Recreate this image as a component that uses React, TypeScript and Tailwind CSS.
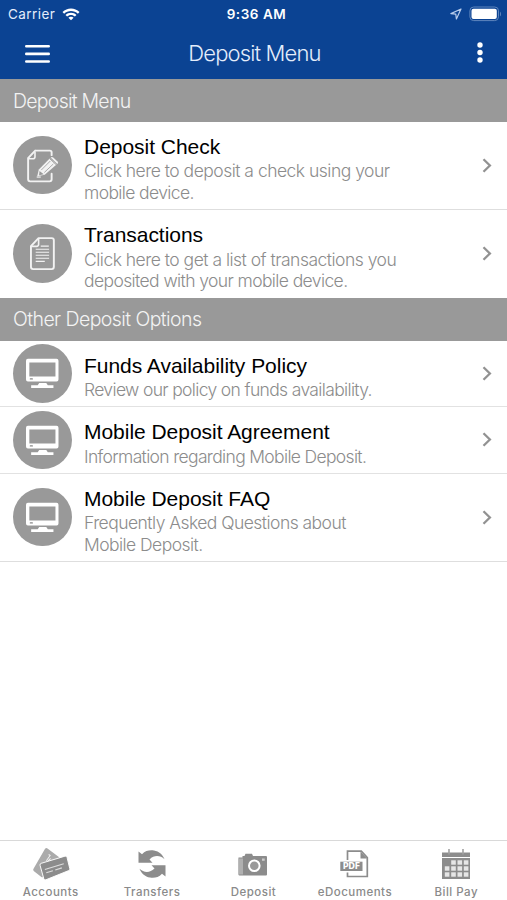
import type { ReactNode } from 'react';

type IconProps = { className?: string };

function WifiIcon() {
  return (
    <svg viewBox="0 0 18 13" className="ml-[7px] h-[13px] w-[18px]" fill="white">
      <path d="M9 0.5c3.200 0 6.200 1.200 8.500 3.500L15.900 5.700C14 3.900 11.600 2.900 9 2.900S4 3.900 2.100 5.700L0.500 4C2.800 1.700 5.800 0.500 9 0.500z" />
      <path d="M9 4.700c2.100 0 4 0.800 5.500 2.200L12.900 8.500C11.800 7.500 10.500 6.900 9 6.900S6.200 7.500 5.100 8.500L3.500 6.900C5 5.500 6.900 4.700 9 4.700z" />
      <path d="M9 8.700c1 0 1.900 0.400 2.600 1L9 12.300 6.400 9.700c0.700-0.600 1.600-1 2.600-1z" />
    </svg>
  );
}

function BatteryIcon() {
  return (
    <svg viewBox="0 0 33 16" className="ml-[7px] h-4 w-[33px]" fill="none">
      <rect x="0.900" y="1" width="28.600" height="13.600" rx="3.800" stroke="#5f86bd" strokeWidth="1" />
      <rect x="2.500" y="2.700" width="25.300" height="10.200" rx="2" fill="white" />
      <path d="M31 5.700c1.300 0.600 1.300 4 0 4.600z" fill="#5f86bd" />
    </svg>
  );
}

function StatusBar() {
  return (
    <div className="grid h-[27px] grid-cols-3 items-center text-white">
      <div className="flex items-center pl-[8px] pt-px font-['Inter'] text-[13.5px] tracking-[0.42px] text-[#e4edfb]">
        Carrier
        <WifiIcon />
      </div>
      <div className="pl-[6px] pt-px text-center font-['Inter'] text-[13.5px] font-semibold tracking-[0.55px]">9:36 AM</div>
      <div className="flex items-center justify-end pr-[5px]">
        <svg viewBox="0 0 12 12" className="h-3 w-3" fill="none" stroke="#b9cdec" strokeWidth="1.200" strokeLinejoin="round">
          <path d="M11 1 0.900 5.600 5.800 6.200 6.400 11z" />
        </svg>
        <BatteryIcon />
      </div>
    </div>
  );
}

function NavBar() {
  return (
    <div className="flex h-[52px] items-center justify-between pl-[25px] pr-[24px]">
      <svg viewBox="0 0 25 20" className="mt-px h-5 w-[25px]" stroke="white" strokeWidth="2.600" strokeLinecap="round">
        <path d="M1.300 2.200h22.400M1.300 9.900h22.400M1.300 17.500h22.400" />
      </svg>
      <h1 className="mr-[18px] pt-px font-['Inter'] text-[22px] font-light tracking-[-0.85px] text-[#e4edfb]">Deposit Menu</h1>
      <svg viewBox="0 0 6 22" className="h-[22px] w-[6px]" fill="white">
        <circle cx="3" cy="3" r="2.700" />
        <circle cx="3" cy="10.500" r="2.700" />
        <circle cx="3" cy="18" r="2.700" />
      </svg>
    </div>
  );
}

function EditIcon() {
  return (
    <svg viewBox="0 0 58 58" className="size-full" fill="none" stroke="#f2f2f2" strokeWidth="1.900">
      <path d="M22 14.500h14.500q1.800 0 1.800 1.800v2.700M38.300 37.500v5.500q0 2-2 2H17q-2 0-2-2V22l7-7.500" strokeLinecap="round" />
      <path d="M15.500 22.500h4.300q2 0 2-2v-5" strokeWidth="1.600" />
      <path d="M24 40l1.600-6.800 11-11.200 6.600 6.200-11.700 10.200z" fill="#f2f2f2" stroke="none" />
      <path d="M37.400 21.200q1.300-1 2.500 0l4.300 4q1.100 1.200 0 2.300l-0.300 0.200-6.600-6.300z" fill="#f2f2f2" stroke="none" />
      <path d="M28 33.800l9-9M31 36.200l9-8.500M36.200 22.400l6.800 6.300" stroke="#999" strokeWidth="0.800" />
      <path d="M26.300 34.600l4.200 3.200-4.600 1.100z" fill="#999" stroke="none" />
      <path d="M23.500 40.700h4" strokeWidth="1.200" />
    </svg>
  );
}

function DocumentIcon() {
  return (
    <svg viewBox="0 0 58 58" className="size-full" fill="none" stroke="#f2f2f2" strokeWidth="1.900">
      <path d="M25.300 14h13q2.200 0 2.200 2.200v26.300q0 2.200-2.200 2.200H20q-2.200 0-2.200-2.200V22z" strokeLinejoin="round" />
      <path d="M18.200 22.200h5.200q2 0 2-2v-5.500" strokeWidth="1.600" />
      <path d="M27.500 22h8M22.500 25h13.300M22.500 28h13.300M22.500 31h13.300M22.500 34h13.300M22.500 37h9" strokeWidth="1.150" />
    </svg>
  );
}

function MonitorIcon() {
  return (
    <svg viewBox="0 0 58 58" className="size-full">
      <path
        d="M14.800 14.600h28.400q1.900 0 1.900 1.900v18.800q0 1.900-1.900 1.900H14.800q-1.900 0-1.900-1.900V16.500q0-1.900 1.900-1.900zM16.200 18.400v13.700h25.900V18.400z"
        fill="white"
        fillRule="evenodd"
      />
      <path d="M26 38.600h7l1.500 2.300h5.600v2.600H18v-2.600h6.500z" fill="white" />
      <rect x="16.600" y="34" width="3.200" height="1.200" rx="0.600" fill="#888" />
    </svg>
  );
}

function ChevronIcon() {
  return (
    <svg viewBox="0 0 10 15" className="h-[15px] w-[10px] shrink-0" fill="none" stroke="#929292" strokeWidth="2.300">
      <path d="M1.500 1.200 7.900 7.500 1.500 13.800" />
    </svg>
  );
}

function SectionHeader({ className, children }: { className: string; children: ReactNode }) {
  return (
    <div className={`flex items-center bg-[#999] pl-[13px] pt-[2px] font-['Inter'] text-[19.500px] font-light text-[#f3f3f3] ${className}`}>
      {children}
    </div>
  );
}

type MenuItem = {
  title: string;
  lines: { text: string; className: string }[];
  icon: ReactNode;
  className: string;
};

function MenuRow({ item }: { item: MenuItem }) {
  return (
    <div className={`flex items-center pl-[13px] pr-[15px] ${item.className}`}>
      <div className="size-[58.500px] shrink-0 rounded-full bg-[#999]">{item.icon}</div>
      <div className="ml-[12.500px] flex-1 whitespace-nowrap pt-[8px]">
        <div className="mb-[2.500px] font-['Liberation_Sans'] text-[21px] leading-[23px] tracking-[-0.03px] text-black">
          {item.title}
        </div>
        {item.lines.map((line) => (
          <div
            key={line.text}
            className={`font-['Inter'] text-[17.500px] font-light leading-[21.500px] text-[#8c8c8c] ${line.className}`}
          >
            {line.text}
          </div>
        ))}
      </div>
      <ChevronIcon />
    </div>
  );
}

const depositItems: MenuItem[] = [
  {
    title: 'Deposit Check',
    lines: [
      { text: 'Click here to deposit a check using your', className: 'tracking-[-0.51px]' },
      { text: 'mobile device.', className: 'tracking-[-0.62px]' },
    ],
    icon: <EditIcon />,
    className: 'h-[88px] border-b border-[#dedede]',
  },
  {
    title: 'Transactions',
    lines: [
      { text: 'Click here to get a list of transactions you', className: 'tracking-[-0.51px]' },
      { text: 'deposited with your mobile device.', className: 'tracking-[-0.6px]' },
    ],
    icon: <DocumentIcon />,
    className: 'h-[88px]',
  },
];

const otherItems: MenuItem[] = [
  {
    title: 'Funds Availability Policy',
    lines: [{ text: 'Review our policy on funds availability.', className: 'tracking-[-0.65px]' }],
    icon: <MonitorIcon />,
    className: 'h-[66.500px] border-b border-[#e2e2e2]',
  },
  {
    title: 'Mobile Deposit Agreement',
    lines: [{ text: 'Information regarding Mobile Deposit.', className: 'tracking-[-0.66px]' }],
    icon: <MonitorIcon />,
    className: 'h-[66.500px] border-b border-[#e2e2e2]',
  },
  {
    title: 'Mobile Deposit FAQ',
    lines: [
      { text: 'Frequently Asked Questions about', className: 'tracking-[-0.54px]' },
      { text: 'Mobile Deposit.', className: 'tracking-[-0.55px]' },
    ],
    icon: <MonitorIcon />,
    className: 'h-[88px] border-b border-[#dedede]',
  },
];

function AccountsIcon({ className }: IconProps) {
  return (
    <svg viewBox="0 0 40 36" className={className}>
      <path d="M13.700 1.800q1.200-1.300 2.600-0.300l12 9q1 0.800 0.200 1.900L12 31.500q-1 1.200-2.200 0.200L1.700 25.300Q0.600 24.300 1.500 23.100z" fill="#ababab" />
      <path d="M17.500 8l1.600 1-4 5.500M19.500 12l-3.500 4" stroke="#f0f0f0" strokeWidth="1.100" fill="none" />
      <path
        d="M9.600 17.300 34.800 9.700q1.600-0.500 2.100 1l3 12.200q0.400 1.500-1 2L14.600 34.700q-1.600 0.500-2.200-1L8.400 19.300q-0.400-1.500 1.200-2z"
        fill="#8c8c8c"
        stroke="white"
        strokeWidth="1"
      />
      <path d="M13.500 23.800 33.500 17.800M15 27.300l7-2.200M24.500 24.300l7-2.200" stroke="#ddd" strokeWidth="1.200" fill="none" />
    </svg>
  );
}

function TransfersIcon({ className }: IconProps) {
  return (
    <svg viewBox="0 0 28 28" className={className} fill="#8c8c8c">
      <path d="M0.500 1.500 4 4.300C7.500 0.300 12 0 16 0.500c5 0.700 9 4.500 10.500 8.800-4-3.800-10-4.800-15 0.200l3 3.200H0.500z" />
      <path d="M27.500 26.500 24 23.700c-3.500 4-8 4.300-12 3.800-5-0.700-9-4.500-10.500-8.800 4 3.800 10 4.800 15-0.200l-3-3.200h14z" />
    </svg>
  );
}

function CameraIcon({ className }: IconProps) {
  return (
    <svg viewBox="0 0 30 23" className={className}>
      <path d="M0.500 4.500h4V3h2l1-2.300h6.500l1 2.300H28q1 0 1 1v17.500q0 1-1 1H1.500q-1 0-1-1z" fill="#8c8c8c" />
      <rect x="0.500" y="5.500" width="4.500" height="16" fill="#b0b0b0" />
      <circle cx="16.300" cy="12.700" r="5.300" fill="#999" stroke="white" strokeWidth="2" />
      <rect x="24" y="5.500" width="2.700" height="2.300" fill="#ccc" />
    </svg>
  );
}

function PdfIcon({ className }: IconProps) {
  return (
    <svg viewBox="0 0 29 28" className={className} fill="none">
      <path d="M7.500 10V1.200h13.800l6 6.400v18.900H7.500v-4" stroke="#8c8c8c" strokeWidth="1.700" />
      <path d="M20.500 1.500v7h6.500z" fill="#8c8c8c" />
      <rect x="0.300" y="11.700" width="22.200" height="9.300" fill="#8c8c8c" />
      <text x="11.400" y="19.300" textAnchor="middle" fontFamily="DejaVu Sans" fontWeight="700" fontSize="8" textLength="17.500" fill="white">
        PDF
      </text>
    </svg>
  );
}

function CalendarIcon({ className }: IconProps) {
  const cells = [
    [9.2, 11.3], [15.5, 11.3], [21.8, 11.3],
    [2.8, 17.3], [9.2, 17.3], [15.5, 17.3], [21.8, 17.3],
    [2.8, 23.3], [9.2, 23.3], [15.5, 23.3], [21.8, 23.3],
  ];
  return (
    <svg viewBox="0 0 28 31" className={className}>
      <rect x="0" y="3.500" width="28" height="4.500" fill="#8c8c8c" />
      <rect x="0" y="9" width="28" height="21" fill="#8c8c8c" />
      <path d="M7 0v5.500M21 0v5.500" stroke="#a0a0a0" strokeWidth="1.600" />
      {cells.map(([x, y]) => (
        <rect key={`${x}-${y}`} x={x} y={y} width="4.600" height="4.400" fill="#e6e6e6" />
      ))}
    </svg>
  );
}

const tabs = [
  { label: 'Accounts', icon: <AccountsIcon className="h-[34px] w-[38px]" /> },
  { label: 'Transfers', icon: <TransfersIcon className="h-[28px] w-[28px]" /> },
  { label: 'Deposit', icon: <CameraIcon className="h-[23px] w-[30px]" /> },
  { label: 'eDocuments', icon: <PdfIcon className="h-[28px] w-[29px]" /> },
  { label: 'Bill Pay', icon: <CalendarIcon className="h-[31px] w-[28px]" /> },
];

function TabBar() {
  return (
    <nav className="grid h-[60px] grid-cols-5 border-t border-[#d9d9d9] bg-white">
      {tabs.map((tab) => (
        <div key={tab.label} className="flex flex-col items-center">
          <div className="mt-[6px] flex h-[34px] items-center">{tab.icon}</div>
          <span className="mt-[2px] font-['Inter'] text-[11.500px] font-medium leading-[18px] tracking-[0.5px] text-[#8a8a8a]">
            {tab.label}
          </span>
        </div>
      ))}
    </nav>
  );
}

export default function App() {
  return (
    <div className="flex h-[900px] w-[507px] flex-col overflow-hidden bg-white">
      <header className="h-[79px] bg-[#0b4393]">
        <StatusBar />
        <NavBar />
      </header>
      <main className="flex-1">
        <SectionHeader className="h-[42.500px] tracking-[-0.75px]">Deposit Menu</SectionHeader>
        {depositItems.map((item) => (
          <MenuRow key={item.title} item={item} />
        ))}
        <SectionHeader className="h-[43px] tracking-[-0.57px]">Other Deposit Options</SectionHeader>
        {otherItems.map((item) => (
          <MenuRow key={item.title} item={item} />
        ))}
      </main>
      <TabBar />
    </div>
  );
}
